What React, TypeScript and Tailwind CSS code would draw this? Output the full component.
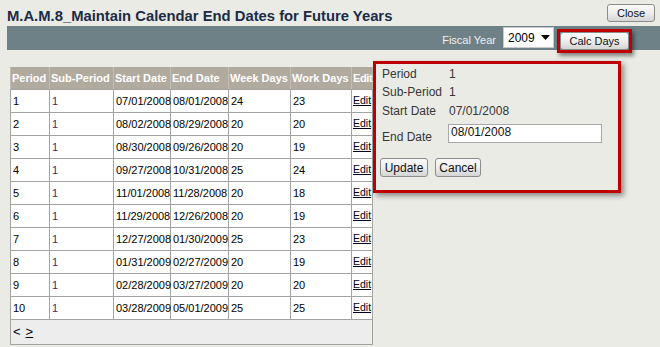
import React from "react";

const rows = [
  ["1", "1", "07/01/2008", "08/01/2008", "24", "23"],
  ["2", "1", "08/02/2008", "08/29/2008", "20", "20"],
  ["3", "1", "08/30/2008", "09/26/2008", "20", "19"],
  ["4", "1", "09/27/2008", "10/31/2008", "25", "24"],
  ["5", "1", "11/01/2008", "11/28/2008", "20", "18"],
  ["6", "1", "11/29/2008", "12/26/2008", "20", "19"],
  ["7", "1", "12/27/2008", "01/30/2009", "25", "23"],
  ["8", "1", "01/31/2009", "02/27/2009", "20", "19"],
  ["9", "1", "02/28/2009", "03/27/2009", "20", "20"],
  ["10", "1", "03/28/2009", "05/01/2009", "25", "25"],
];

const headers = ["Period", "Sub-Period", "Start Date", "End Date", "Week Days", "Work Days", "Edit"];

const btn =
  "border border-[#8c8c8c] rounded-[3px] bg-gradient-to-b from-[#fafafa] via-[#eeeeee] to-[#d4d4d4] text-[#111] flex items-center justify-center";

export default function App() {
  return (
    <div
      className="w-[660px] h-[347px] bg-[#ebebe6] relative overflow-hidden"
      style={{ fontFamily: '"Liberation Sans", Arial, sans-serif' }}
    >
      {/* header */}
      <div className="h-[26px] flex justify-between items-start">
        <div className="pl-[7px] pt-[8px] text-[14.8px] leading-[17px] font-bold text-[#1b2c46] whitespace-nowrap">
          M.A.M.8_Maintain Calendar End Dates for Future Years
        </div>
        <button className={`${btn} mt-[4px] mr-[5px] w-[48px] h-[18px] text-[11px] leading-none`}>Close</button>
      </div>

      {/* bar */}
      <div className="ml-[7px] h-[24px] bg-[#6d8187] flex items-start justify-end pr-[28px]">
        <div className="mt-[8px] text-[11px] leading-[13px] text-[#f0f0f0] mr-[7px]">Fiscal Year</div>
        <div className="mt-[1px] w-[51px] h-[21px] bg-white border border-[#c8c8c8] flex items-center justify-between pl-[4px] pr-[3px]">
          <span className="text-[12px] leading-none text-black">2009</span>
          <svg width="9" height="5" viewBox="0 0 9 5">
            <path d="M0 0H9L4.5 5Z" fill="#000" />
          </svg>
        </div>
        <div className="ml-[3px] mt-[3px] w-[75px] h-[24px] border-[3px] border-[#c00000] shadow-[2px_3px_4px_rgba(0,0,0,0.45)] flex">
          <button className={`${btn} w-full h-full rounded-[2px] text-[11px] leading-none`}>Calc Days</button>
        </div>
      </div>

      {/* table */}
      <div className="ml-[10px] mt-[17px] w-[363px]">
        <div className="grid grid-cols-[38px_63px_56px_57px_61px_60px_20px] gap-x-px px-px bg-[#c3bdb2]">
          {headers.map((h) => (
            <div
              key={h}
              className={`h-[22px] bg-[#b1aa9f] text-white font-bold text-[11px] flex items-center pl-[1px] whitespace-nowrap overflow-visible ${
                h === "Edit" ? "tracking-[-0.4px]" : ""
              }`}
            >
              {h}
            </div>
          ))}
        </div>
        <div className="grid grid-cols-[38px_63px_56px_57px_61px_60px_20px] gap-px p-px bg-[#a3a3a3]">
          {rows.map((r) => (
            <React.Fragment key={r[0]}>
              {r.map((c, i) => (
                <div
                  key={i}
                  className={`h-[22px] bg-white text-[11px] flex items-center pl-[2px] whitespace-nowrap ${
                    i === 1 ? "text-[#5a1e5a]" : "text-black"
                  }`}
                >
                  {c}
                </div>
              ))}
              <div className="h-[22px] bg-white text-[10.5px] flex items-center pl-[1px] whitespace-nowrap">
                <a className="underline text-[#000022]">Edit</a>
              </div>
            </React.Fragment>
          ))}
        </div>
        <div className="h-[25px] bg-[#ededed] border-x border-b border-[#a3a3a3] flex items-center pl-[2px] text-[13px] text-black">
          <span>&lt;</span>
          <span className="ml-[5px] underline">&gt;</span>
        </div>
      </div>

      {/* edit panel */}
      <div className="absolute left-[373px] top-[61px] w-[248px] h-[132px] border-[3px] border-[#c00000] bg-[#ebebe6] shadow-[3px_3px_5px_rgba(0,0,0,0.4)] text-[12px] text-[#363636]">
        <div className="mt-[1px] pl-[6px]">
          <div className="flex h-[18px] items-center">
            <span className="w-[67px]">Period</span>
            <span>1</span>
          </div>
          <div className="flex h-[18px] items-center">
            <span className="w-[67px] whitespace-nowrap">Sub-Period</span>
            <span>1</span>
          </div>
          <div className="flex h-[19px] items-center">
            <span className="w-[67px]">Start Date</span>
            <span>07/01/2008</span>
          </div>
          <div className="flex h-[24px] items-end">
            <span className="w-[67px] leading-[14px]">End Date</span>
            <div className="ml-[-1px] mb-[1px] w-[154px] h-[19px] bg-white border border-[#a8a8a8] pl-[2px] text-[#111] leading-[15px]">
              08/01/2008
            </div>
          </div>
        </div>
        <div className="flex mt-[14px] pl-[4px]">
          <button className={`${btn} w-[48px] h-[19px] text-[12px] leading-none`}>Update</button>
          <button className={`${btn} ml-[7px] w-[46px] h-[19px] text-[12px] leading-none`}>Cancel</button>
        </div>
      </div>
    </div>
  );
}
